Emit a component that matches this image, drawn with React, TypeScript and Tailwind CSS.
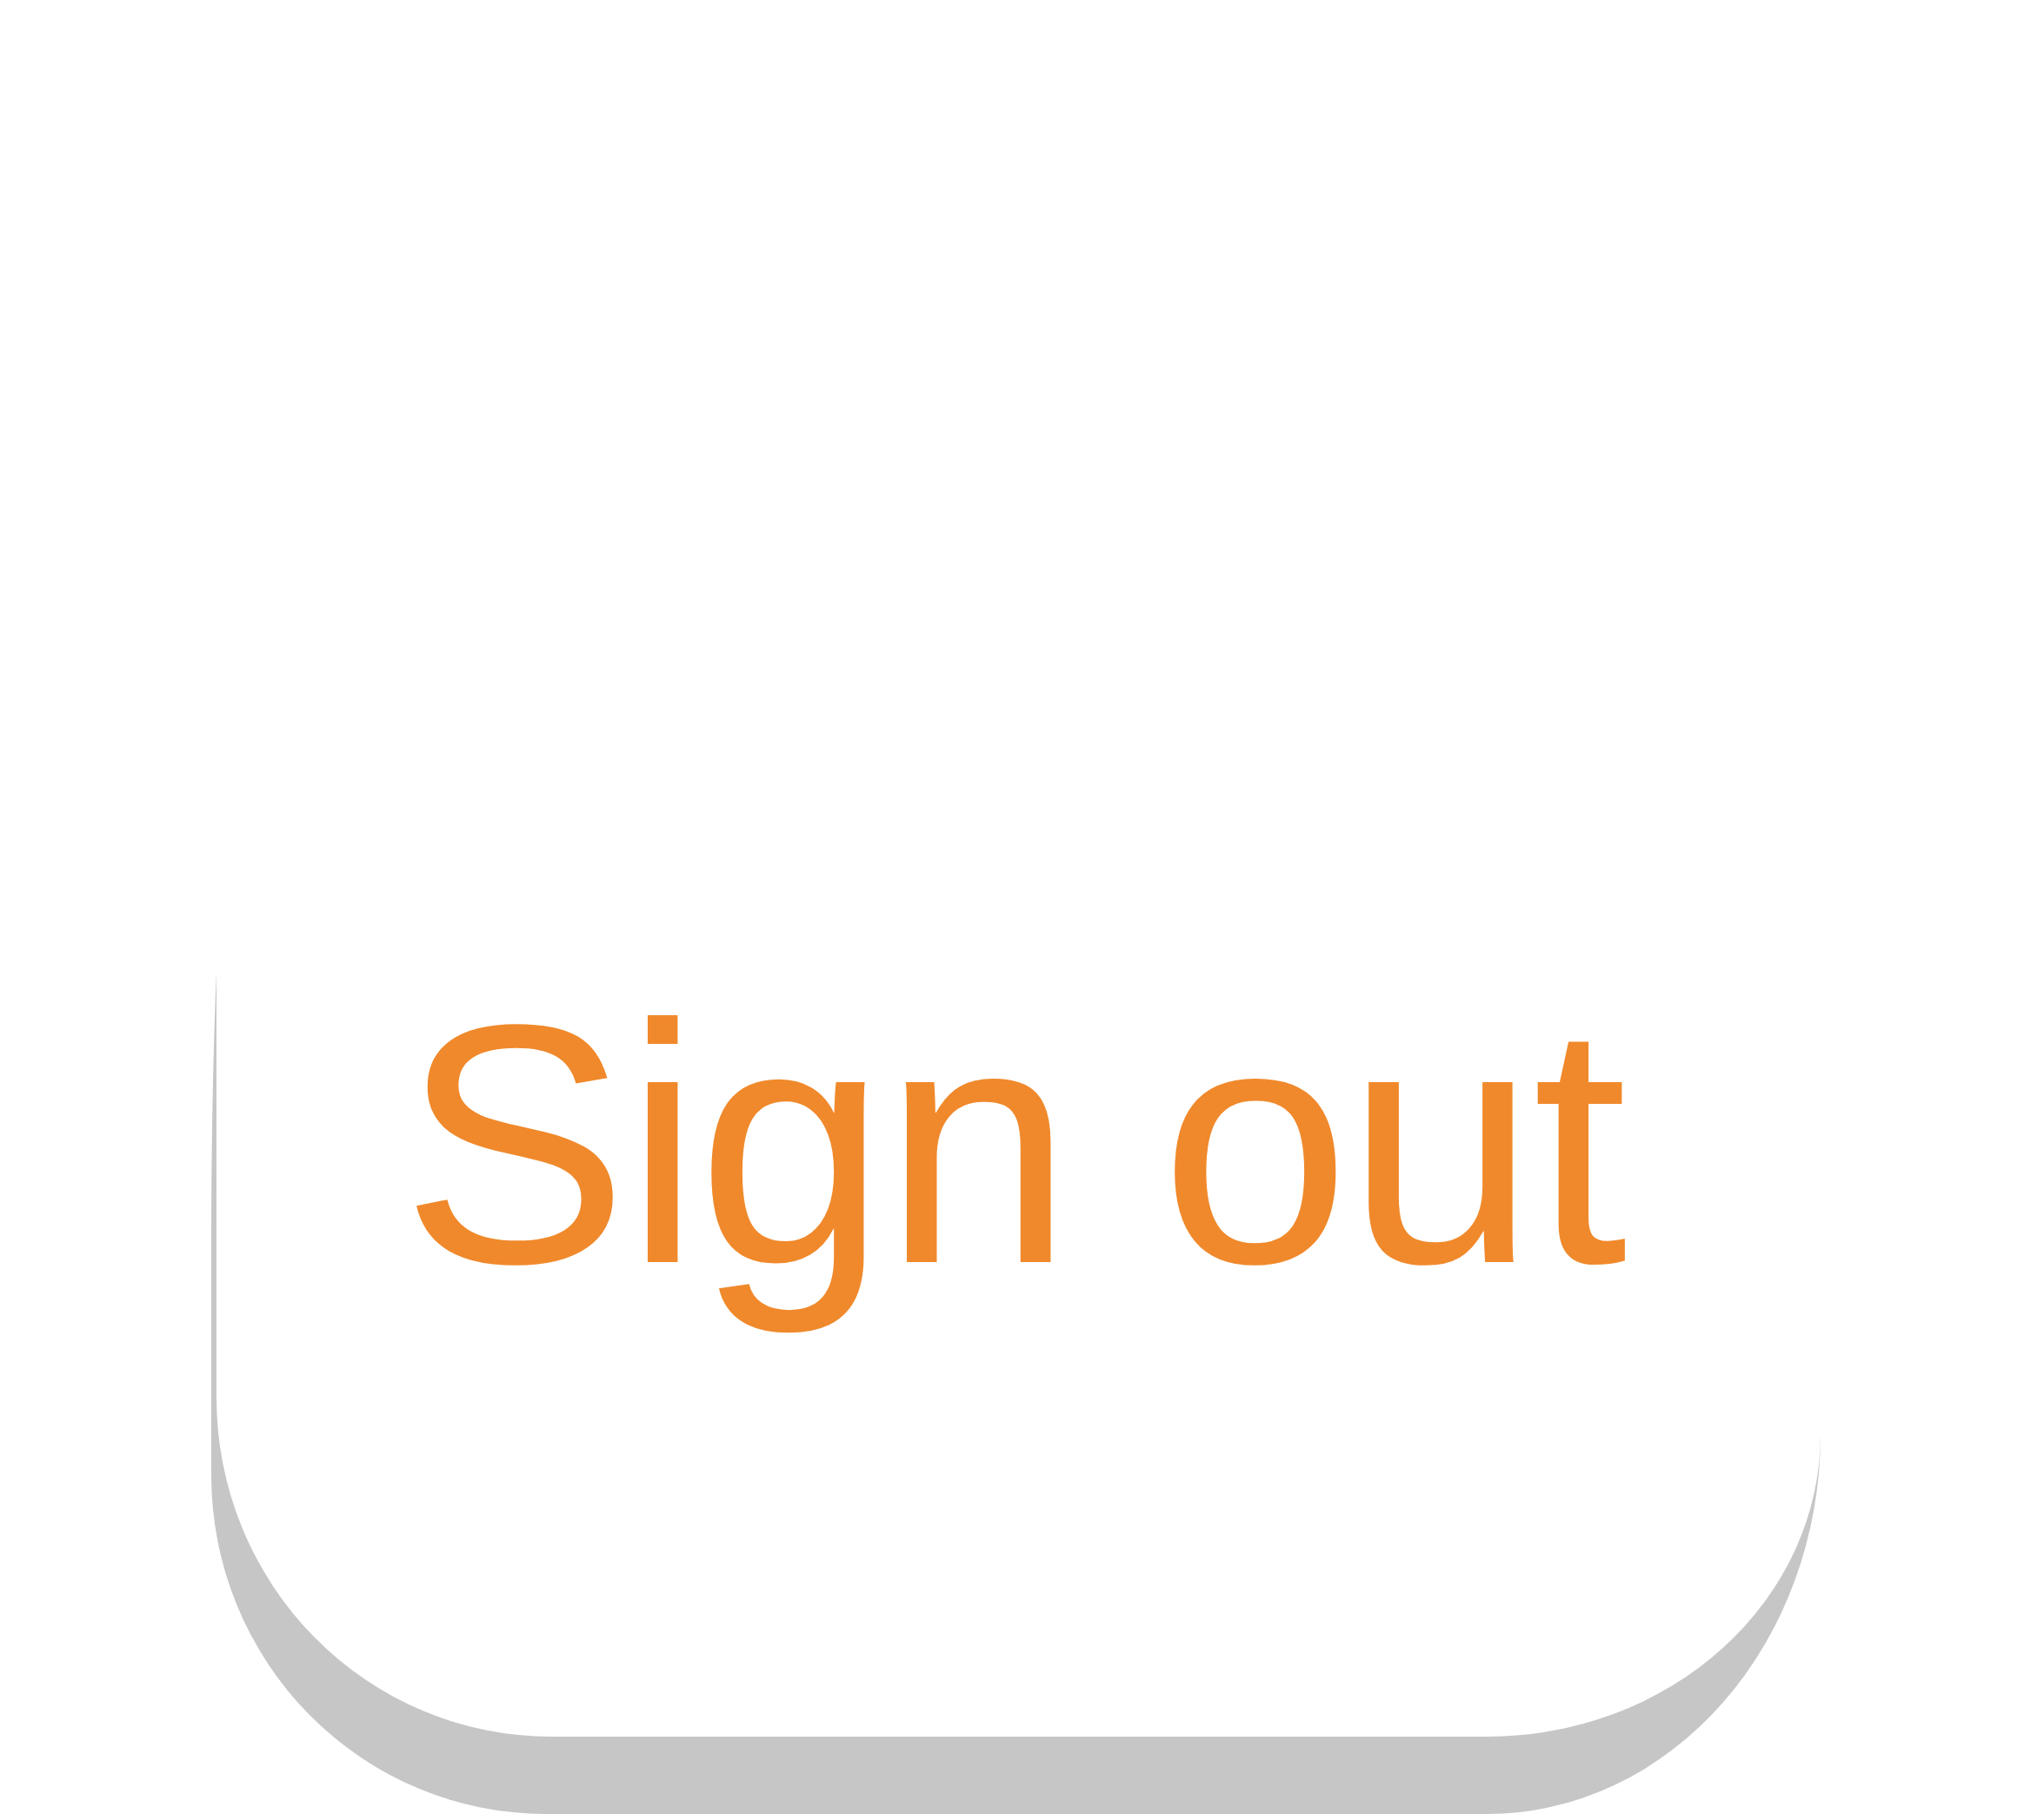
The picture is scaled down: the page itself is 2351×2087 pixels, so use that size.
export default function App() {
  return (
    <div className="w-[2351px] h-[2087px] overflow-hidden bg-white">
      <div className="grid w-[1851px] ml-[243px]">
        {/* grey lip under the button */}
        <div className="[grid-area:1/1] self-end mt-[837px] h-[1250px] bg-[#c6c6c6] rounded-tl-[40px_593px] rounded-bl-[385px_390px] rounded-br-[384px_437px]" />
        <button
          type="button"
          className="[grid-area:1/1] self-start ml-[6px] h-[1998px] bg-white rounded-bl-[385px_390px] rounded-br-[384px_348px] flex justify-center items-start pt-[1120px] pr-[14px] text-[#f0892b] text-[392px] leading-none tracking-[-4px] font-['Liberation_Sans',Arial,sans-serif] cursor-pointer"
        >
          Sign out
        </button>
      </div>
    </div>
  )
}
